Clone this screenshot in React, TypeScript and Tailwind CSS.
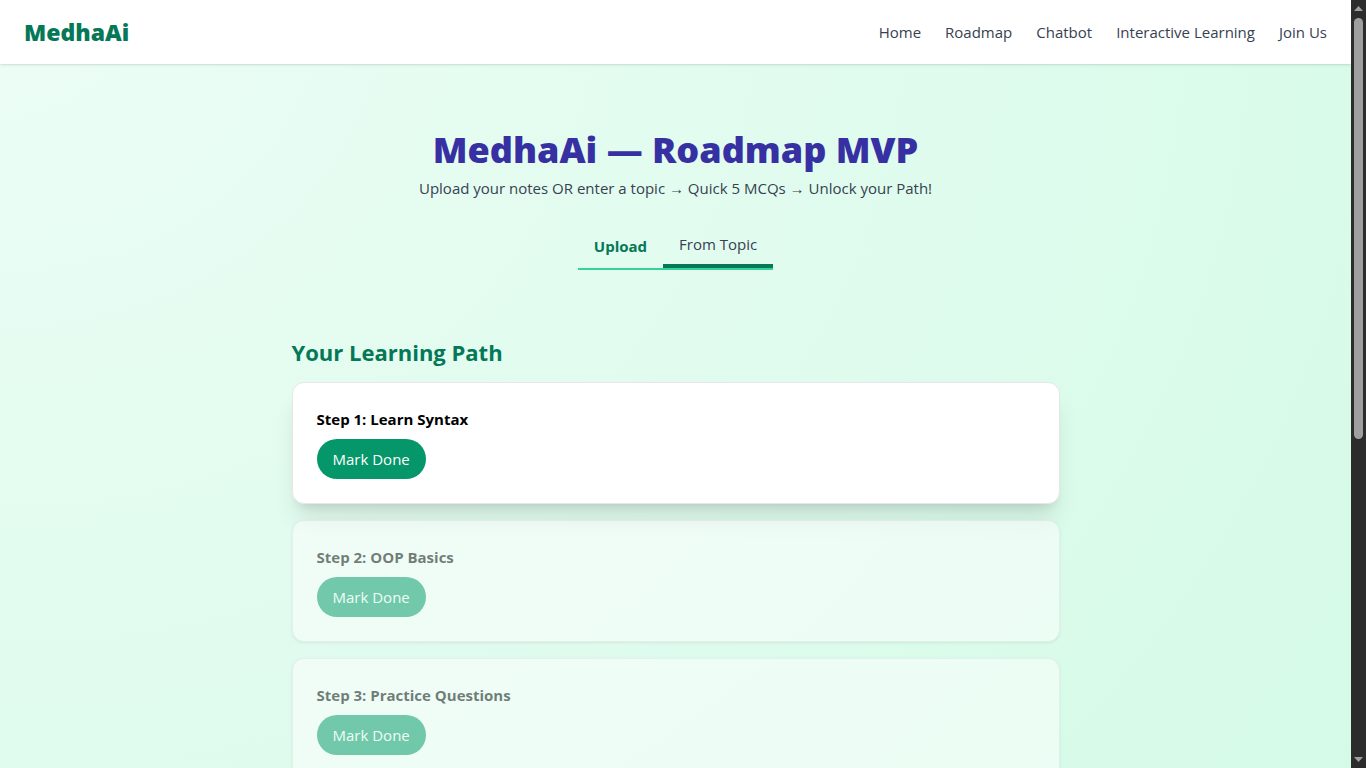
const navItems = ["Home", "Roadmap", "Chatbot", "Interactive Learning", "Join Us"];

const steps = [
  { title: "Step 1: Learn Syntax", unlocked: true },
  { title: "Step 2: OOP Basics", unlocked: false },
  { title: "Step 3: Practice Questions", unlocked: false },
];

function Header() {
  return (
    <header className="flex items-center justify-between bg-white px-6 py-4 shadow-[0_1px_3px_0_rgb(0_0_0/0.1),0_1px_2px_-1px_rgb(0_0_0/0.1)]">
      <a href="#" className="text-[23px] leading-8 font-extrabold text-[#047857]">
        MedhaAi
      </a>
      <nav className="flex gap-6">
        {navItems.map((item) => (
          <a key={item} href="#" className="leading-6 text-[#374151]">
            {item}
          </a>
        ))}
      </nav>
    </header>
  );
}

function Tabs() {
  return (
    <div role="tablist" className="mx-auto mt-6 flex w-fit border-b-2 border-[#34d399]">
      <button role="tab" className="px-4 py-2 leading-6 font-bold text-[#047857]">
        Upload
      </button>
      <button role="tab" className="border-b-4 border-[#047857] px-4 py-2 leading-6 text-[#374151]">
        From Topic
      </button>
    </div>
  );
}

function StepCard({ title, unlocked }: { title: string; unlocked: boolean }) {
  return (
    <li
      className={
        unlocked
          ? "rounded-xl border border-[#e5e7eb] bg-white p-6 shadow-[0_20px_25px_-5px_rgb(0_0_0/0.1),0_8px_10px_-6px_rgb(0_0_0/0.1)]"
          : "rounded-xl border border-[#e5e7eb] bg-white p-6 opacity-50 shadow-[0_1px_3px_0_rgb(0_0_0/0.1),0_1px_2px_-1px_rgb(0_0_0/0.1)]"
      }
    >
      <h3 className="leading-6 font-bold text-black">{title}</h3>
      <button disabled={!unlocked} className="mt-2 rounded-full bg-[#059669] px-4 py-2 leading-6 text-white">
        Mark Done
      </button>
    </li>
  );
}

function Scrollbar() {
  return (
    <div aria-hidden="true" className="flex w-[15px] shrink-0 flex-col items-center justify-between bg-[#2c2c2c] py-1.5">
      <svg width="9" height="5" viewBox="0 0 9 5" className="shrink-0" fill="#9f9f9f">
        <path d="M4.5 0 9 5H0Z" />
      </svg>
      <div className="mt-[7px] min-h-0 w-[9px] flex-1">
        <div className="h-[57%] rounded-full bg-[#9f9f9f]" />
      </div>
      <svg width="9" height="5" viewBox="0 0 9 5" className="shrink-0" fill="#9f9f9f">
        <path d="M0 0h9L4.5 5Z" />
      </svg>
    </div>
  );
}

export default function App() {
  return (
    <div className="flex h-screen overflow-hidden font-['Segoe_UI','Open_Sans',sans-serif] text-[15px]">
      <div className="min-w-0 flex-1 overflow-hidden">
        <div className="min-h-[150vh] bg-[radial-gradient(ellipse_at_top_left,#ecfdf5,#d1fae5)]">
          <Header />
          <main className="px-6 py-16">
            <h1 className="text-center text-4xl leading-11 font-extrabold text-[#3730a3]">MedhaAi — Roadmap MVP</h1>
            <p className="mt-1 text-center leading-6 text-[#374151]">
              Upload your notes OR enter a topic → Quick 5 MCQs → Unlock your Path!
            </p>
            <Tabs />
            <section className="mx-auto mt-16 max-w-3xl">
              <h2 className="mb-3 text-[22px] leading-9 font-bold text-[#047857]">Your Learning Path</h2>
              <ul className="flex flex-col gap-4">
                {steps.map((step) => (
                  <StepCard key={step.title} {...step} />
                ))}
              </ul>
            </section>
          </main>
        </div>
      </div>
      <Scrollbar />
    </div>
  );
}
